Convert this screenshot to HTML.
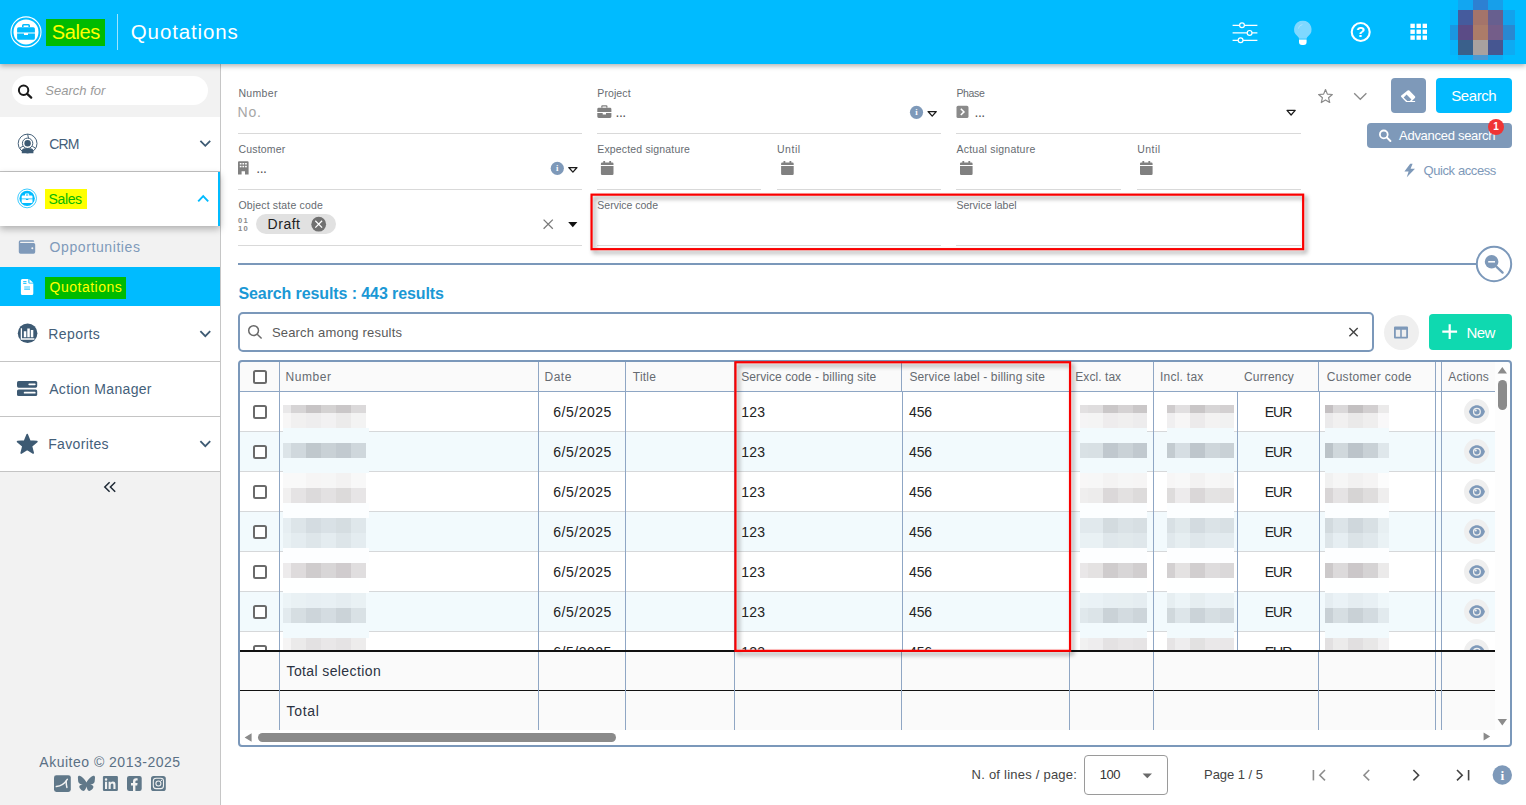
<!DOCTYPE html>
<html lang="en">
<head>
<meta charset="utf-8">
<title>Quotations</title>
<style>
*{box-sizing:border-box;margin:0;padding:0}
html,body{width:1526px;height:805px;overflow:hidden;background:#fff;font-family:"Liberation Sans",sans-serif;color:#333}
body{position:relative}
.a{position:absolute}
.t{position:absolute;white-space:nowrap;line-height:1}
svg.i{position:absolute;left:0;top:0;width:1526px;height:805px;overflow:visible;pointer-events:none}
.cb{position:absolute;left:253px;width:14px;height:14px;border:2px solid #6a6a6a;border-radius:2.5px;background:#fff}
.m{position:absolute}
</style>
</head>
<body>
<!-- ===== SIDEBAR ===== -->
<div class="a" style="left:0;top:64px;width:220px;height:741px;background:#f2f2f2"></div>
<div class="a" style="left:220px;top:64px;width:1px;height:741px;background:#c6c6c6"></div>
<div class="a" style="left:12px;top:76px;width:196px;height:29px;border-radius:15px;background:#fff"></div>
<span class="t" style="left:45.2px;top:83.8px;font-size:13px;color:#9a9a9a;letter-spacing:0.02px;font-style:italic;">Search for</span>
<div class="a" style="left:0;top:117px;width:220px;height:55px;background:#fff;border-bottom:1px solid #c4c4c4"></div>
<span class="t" style="left:49.3px;top:137.1px;font-size:14px;color:#44607a;letter-spacing:-0.9px;">CRM</span>
<div class="a" style="left:0;top:267px;width:220px;height:39px;background:#00bbff"></div>
<div class="a" style="left:45px;top:277px;width:81px;height:22px;background:#00bb00"></div>
<span class="t" style="left:49.6px;top:239.6px;font-size:14px;color:#7f9aba;letter-spacing:0.59px;">Opportunities</span>
<span class="t" style="left:49.6px;top:279.8px;font-size:14px;color:#ffff00;letter-spacing:0.49px;">Quotations</span>
<div class="a" style="left:0;top:172px;width:220px;height:54px;background:#fff;box-shadow:0 3px 7px rgba(0,0,0,.28)"></div>
<div class="a" style="left:218px;top:172px;width:2px;height:54px;background:#00bbff"></div>
<div class="a" style="left:45px;top:189px;width:42px;height:20px;background:#ffff00"></div>
<span class="t" style="left:48.6px;top:191.9px;font-size:14px;color:#08b800;letter-spacing:-0.4px;">Sales</span>
<div class="a" style="left:0;top:306px;width:220px;height:56px;background:#fff;border-bottom:1px solid #c4c4c4"></div>
<div class="a" style="left:0;top:362px;width:220px;height:55px;background:#fff;border-bottom:1px solid #c4c4c4"></div>
<div class="a" style="left:0;top:417px;width:220px;height:55px;background:#fff;border-bottom:1px solid #c4c4c4"></div>
<span class="t" style="left:48.2px;top:327.1px;font-size:14px;color:#44607a;letter-spacing:0.43px;">Reports</span>
<span class="t" style="left:49.2px;top:382.0px;font-size:14px;color:#44607a;letter-spacing:0.33px;">Action Manager</span>
<span class="t" style="left:48.2px;top:437.1px;font-size:14px;color:#44607a;letter-spacing:0.35px;">Favorites</span>
<span class="t" style="left:39.3px;top:754.8px;font-size:14px;color:#5a7085;letter-spacing:0.5px;">Akuiteo © 2013-2025</span>
<svg class="i" viewBox="0 0 1526 805">
<!-- search -->
<circle cx="23.6" cy="90.2" r="4.7" fill="none" stroke="#1a1a1a" stroke-width="2"/><path d="M27.2 93.8 L31.2 97.6" stroke="#1a1a1a" stroke-width="2.3" stroke-linecap="round"/>
<!-- CRM -->
<g transform="translate(0,.7)"><g stroke="#3d5a73" fill="none" stroke-width=".95"><circle cx="27.600" cy="142.800" r="9.400"/><circle cx="27.600" cy="142.600" r="5.200" fill="#fff"/><path d="M27.600 133.400 L28.500 137.500 M19.600 147.600 L23 145.400 M35.600 147.600 L32.200 145.400"/></g>
<circle cx="27.600" cy="142.500" r="3.200" fill="#3d5a73"/><path d="M21.800 152.600 v-1.800 q0 -3.200 3.200 -3.200 h5.200 q3.200 0 3.200 3.200 v1.800 z" fill="#3d5a73"/></g>
<path d="M200.4 140.8 L205.3 145.8 L210.2 140.8" fill="none" stroke="#3d5a73" stroke-width="1.8"/>
<!-- Sales -->
<circle cx="27.100" cy="198.400" r="9.400" fill="none" stroke="#00bbff" stroke-width=".9" opacity=".85"/><circle cx="27.100" cy="198.400" r="7.700" fill="#00bbff"/>
<path d="M21.700 196.600 a1 1 0 0 1 1-1 h8.800 a1 1 0 0 1 1 1 v1.800 h-10.800z M21.700 199.200 h4.200 v.9 h2.400 v-.9 h4.200 v2.800 a1 1 0 0 1-1 1 h-8.800 a1 1 0 0 1-1-1z M25 195.400 v-.9 a.9 .9 0 0 1 .9-.9 h2.400 a.9 .9 0 0 1 .9 .9 v.9 h-1 v-.8 h-2.200 v.8z" fill="#fff"/>
<path d="M198.2 201.4 L203.2 196.2 L208.2 201.4" fill="none" stroke="#00bbff" stroke-width="1.9"/>
<!-- wallet -->
<path d="M20.6 240.2 h12.4 a1.2 1.2 0 0 1 1.2 1.2 v.3 h-13.6 a.6 .6 0 0 0 0 1.2 h13 a1.6 1.6 0 0 1 1.6 1.6 v7.6 a1.6 1.6 0 0 1-1.6 1.6 h-13 a1.8 1.8 0 0 1-1.8-1.8 v-9.9 a1.8 1.8 0 0 1 1.8-1.8z" fill="#7f9aba"/><circle cx="32.3" cy="248.2" r="1" fill="#f2f2f2"/>
<!-- file -->
<path d="M22.4 279 h6 v3.6 a1 1 0 0 0 1 1 h3.9 v9.9 a1.5 1.5 0 0 1-1.5 1.5 h-9.4 a1.5 1.5 0 0 1-1.5-1.5 v-13 a1.5 1.5 0 0 1 1.5-1.5z M29.4 279.2 l3.8 3.6 h-3.4 a.4 .4 0 0 1-.4-.4z" fill="#fff"/>
<path d="M23.200 281.600 h3.300 M23.200 283.500 h3.300 M24.200 287 h5.800 M24.200 289.100 h5.800" stroke="#00bbff" stroke-width="1.100" opacity=".8"/>
<!-- reports -->
<circle cx="27.600" cy="333.300" r="9.800" fill="#3d5a73"/><path d="M21.400 328.200 v10.800 h13" fill="none" stroke="#fff" stroke-width="1.300"/><path d="M23.800 331.200 h2.500 v6.100 h-2.500z M27.300 328.500 h2.500 v8.800 h-2.500z M30.800 330 h2.500 v7.300 h-2.500z" fill="#fff"/>
<path d="M200.4 331.2 L205.3 336.2 L210.2 331.2" fill="none" stroke="#3d5a73" stroke-width="1.8"/>
<!-- action manager -->
<rect x="17" y="381" width="20.2" height="6.7" rx="1.6" fill="#3d5a73"/><rect x="17" y="389.4" width="20.2" height="6.7" rx="1.6" fill="#3d5a73"/><path d="M29.200 384.300 h5.600 M24.600 392.700 h10.200" stroke="#fff" stroke-width="1.700" stroke-linecap="round"/>
<!-- star -->
<path d="M27.20 434.60 L29.85 441.16 L36.90 441.65 L31.48 446.19 L33.20 453.05 L27.20 449.30 L21.20 453.05 L22.92 446.19 L17.50 441.65 L24.55 441.16 Z" fill="#3d5a73" stroke="#3d5a73" stroke-width="1.600" stroke-linejoin="round"/>
<path d="M200.4 441.2 L205.3 446.2 L210.2 441.2" fill="none" stroke="#3d5a73" stroke-width="1.8"/>
<!-- collapse -->
<path d="M109.6 482.2 L104.8 487 L109.6 491.8 M115.2 482.2 L110.4 487 L115.2 491.8" fill="none" stroke="#1f2a36" stroke-width="1.5"/>
<!-- social -->
<g fill="#607889">
<rect x="54" y="775.200" width="16.800" height="16.800" rx="2.400"/>
<path transform="translate(77.900,774.800) scale(.7125)" d="M12 10.8c-1.087-2.114-4.046-6.053-6.798-7.995C2.566.944 1.561 1.266.902 1.565.139 1.908 0 3.080 0 3.768c0 .690.378 5.650.624 6.479.815 2.736 3.713 3.660 6.383 3.364-3.912.580-7.387 2.005-2.830 7.078 5.013 5.190 6.870-1.113 7.823-4.308.953 3.195 2.050 9.271 7.733 4.308 4.267-4.308 1.172-6.498-2.740-7.078 2.670.297 5.568-.628 6.383-3.364.246-.828.624-5.790.624-6.479 0-.690-.139-1.861-.902-2.206-.659-.298-1.664-.620-4.300 1.240C16.046 4.748 13.087 8.687 12 10.800Z"/>
<rect x="102.900" y="775.900" width="15" height="15.100" rx="1.200"/>
<rect x="127" y="775.900" width="14.700" height="15.100" rx="2.200"/>
<rect x="151" y="775.900" width="14.800" height="15.100" rx="2.600"/>
</g>
<path d="M56.300 786.600 Q63.200 786 67.300 779.400" fill="none" stroke="#f2f2f2" stroke-width="1.500" stroke-linecap="round"/><path d="M66.100 781.200 Q66.300 784.800 66.900 787.400" fill="none" stroke="#f2f2f2" stroke-width="1.500" stroke-linecap="round"/>
<path d="M105 781.800 h2.100 v7.200 h-2.100z M106.050 778.200 a1.250 1.250 0 1 1 0 2.500 a1.250 1.250 0 1 1 0-2.500z M108.600 781.800 h2 v1 c.5-.8 1.300-1.200 2.300-1.200 c1.900 0 2.600 1.200 2.600 3.100 v4.300 h-2.100 v-3.800 c0-1-.3-1.700-1.200-1.700 c-1 0-1.500.7-1.500 1.700 v3.800 h-2.100z" fill="#f2f2f2"/>
<path d="M133 791 v-5.600 h-2 v-2.300 h2 v-1.700 c0-2 1.200-3.100 3-3.100 c.8 0 1.600.1 1.600.1 v2 h-1 c-.9 0-1.200.6-1.200 1.200 v1.500 h2.200 l-.4 2.300 h-1.800 v5.600z" fill="#f2f2f2"/>
<rect x="153.300" y="778.300" width="10.200" height="10.300" rx="2.800" fill="none" stroke="#f2f2f2" stroke-width="1.100"/><circle cx="158.400" cy="783.450" r="2.500" fill="none" stroke="#f2f2f2" stroke-width="1.100"/><circle cx="161.400" cy="780.400" r=".65" fill="#f2f2f2"/>
</svg>
<!-- ===== HEADER ===== -->
<div class="a" style="left:0;top:0;width:1526px;height:64px;background:#00bbff;box-shadow:0 2px 5px rgba(0,0,0,.3)"></div>
<div class="a" style="left:46px;top:19px;width:59px;height:27px;background:#00bb00"></div>
<div class="a" style="left:117px;top:14px;width:1px;height:36px;background:rgba(255,255,255,.62)"></div>
<span class="t" style="left:51.7px;top:22.1px;font-size:20px;color:#ffff00;letter-spacing:-0.38px;">Sales</span>
<span class="t" style="left:130.8px;top:21.6px;font-size:20.5px;color:#ffffff;letter-spacing:0.88px;">Quotations</span>
<div class="m" style="left:1458px;top:0px;width:15px;height:10px;background:#12a6f1"></div><div class="m" style="left:1473px;top:0px;width:15px;height:10px;background:#2d80d2"></div><div class="m" style="left:1488px;top:0px;width:15px;height:10px;background:#179fea"></div><div class="m" style="left:1450px;top:10px;width:8px;height:15px;background:#08b1f8"></div><div class="m" style="left:1458px;top:10px;width:15px;height:15px;background:#455b9d"></div><div class="m" style="left:1473px;top:10px;width:15px;height:15px;background:#a4746a"></div><div class="m" style="left:1488px;top:10px;width:15px;height:15px;background:#675f8f"></div><div class="m" style="left:1503px;top:10px;width:12px;height:15px;background:#12a2ec"></div><div class="m" style="left:1450px;top:25px;width:8px;height:15px;background:#1a97e1"></div><div class="m" style="left:1458px;top:25px;width:15px;height:15px;background:#5b4b86"></div><div class="m" style="left:1473px;top:25px;width:15px;height:15px;background:#ac7c69"></div><div class="m" style="left:1488px;top:25px;width:15px;height:15px;background:#745d89"></div><div class="m" style="left:1503px;top:25px;width:12px;height:15px;background:#2988d1"></div><div class="m" style="left:1450px;top:40px;width:8px;height:15px;background:#06b3fa"></div><div class="m" style="left:1458px;top:40px;width:15px;height:15px;background:#3a608b"></div><div class="m" style="left:1473px;top:40px;width:15px;height:15px;background:#a9a19f"></div><div class="m" style="left:1488px;top:40px;width:15px;height:15px;background:#465691"></div><div class="m" style="left:1503px;top:40px;width:12px;height:15px;background:#0eaaf2"></div><div class="m" style="left:1458px;top:55px;width:15px;height:5px;background:#10aaf3"></div><div class="m" style="left:1473px;top:55px;width:15px;height:5px;background:#4a99d2"></div><div class="m" style="left:1488px;top:55px;width:15px;height:5px;background:#0eabf3"></div>
<svg class="i" viewBox="0 0 1526 805">
<!-- logo -->
<circle cx="26" cy="31.900" r="15" fill="none" stroke="#fff" stroke-width="1.100"/><circle cx="26" cy="31.900" r="12.500" fill="#fff"/>
<path d="M17.100 28.800 a1.600 1.600 0 0 1 1.600-1.600 h14.600 a1.600 1.600 0 0 1 1.600 1.600 v3.600 h-17.800z M17.100 33.600 h6.900 v1.500 h4 v-1.500 h6.900 v4.600 a1.600 1.600 0 0 1-1.600 1.600 h-14.600 a1.600 1.600 0 0 1-1.600-1.600z M22 27 v-1.600 a1.500 1.500 0 0 1 1.500-1.500 h5 a1.500 1.500 0 0 1 1.500 1.500 v1.600 h-1.600 v-1.500 h-4.800 v1.500z" fill="#00bbff"/>
<!-- sliders -->
<g stroke="#fff" stroke-width="1.2" fill="#00bbff"><path d="M1232.600 25.300 H1257.400 M1232.600 32.900 H1257.400 M1232.600 40.300 H1257.400"/><circle cx="1242" cy="25.300" r="2.400"/><circle cx="1249.600" cy="32.900" r="2.400"/><circle cx="1240.600" cy="40.300" r="2.400"/></g>
<!-- bulb -->
<path d="M1302.800 20.700 a8.700 8.700 0 0 0-5.300 15.600 c1 .9 1.500 1.700 1.500 2.500 h7.600 c0-.8.5-1.600 1.500-2.500 a8.700 8.700 0 0 0-5.300-15.600z" fill="#7fd8ff"/>
<path d="M1299 39.600 h7.600 v2.400 a3 3 0 0 1-3 3 h-1.600 a3 3 0 0 1-3-3z" fill="#fff"/>
<path d="M1298.400 28.600 a4.600 4.600 0 0 1 4-4" fill="none" stroke="#a8e4ff" stroke-width="1"/>
<!-- help -->
<circle cx="1360.700" cy="32" r="9" fill="none" stroke="#fff" stroke-width="2.100"/>
<text x="1360.700" y="37.400" font-family="Liberation Sans, sans-serif" font-size="15" font-weight="bold" fill="#fff" text-anchor="middle">?</text>
<!-- grid -->
<g fill="#fff"><rect x="1410.4" y="23.7" width="4.4" height="4.3"/><rect x="1416.5" y="23.7" width="4.4" height="4.3"/><rect x="1422.6" y="23.7" width="4.4" height="4.3"/><rect x="1410.4" y="29.6" width="4.4" height="4.3"/><rect x="1416.5" y="29.6" width="4.4" height="4.3"/><rect x="1422.6" y="29.6" width="4.4" height="4.3"/><rect x="1410.4" y="35.5" width="4.4" height="4.3"/><rect x="1416.5" y="35.5" width="4.4" height="4.3"/><rect x="1422.6" y="35.5" width="4.4" height="4.3"/></g>
</svg>
<!-- ===== FILTERS ===== -->
<div class="a" style="left:238px;top:133px;width:344px;height:1px;background:#d9d9d9"></div><div class="a" style="left:238px;top:245px;width:344px;height:1px;background:#d9d9d9"></div><div class="a" style="left:597px;top:133px;width:344px;height:1px;background:#d9d9d9"></div><div class="a" style="left:597px;top:245px;width:344px;height:1px;background:#d9d9d9"></div><div class="a" style="left:956px;top:133px;width:345px;height:1px;background:#d9d9d9"></div><div class="a" style="left:956px;top:245px;width:345px;height:1px;background:#d9d9d9"></div><div class="a" style="left:238px;top:189px;width:344px;height:1px;background:#d9d9d9"></div><div class="a" style="left:597px;top:189px;width:164px;height:1px;background:#d9d9d9"></div><div class="a" style="left:777px;top:189px;width:164px;height:1px;background:#d9d9d9"></div><div class="a" style="left:956px;top:189px;width:165px;height:1px;background:#d9d9d9"></div><div class="a" style="left:1137px;top:189px;width:164px;height:1px;background:#d9d9d9"></div>
<span class="t" style="left:238.4px;top:88.1px;font-size:10.5px;color:#666b71;letter-spacing:0.34px;">Number</span>
<span class="t" style="left:597.3px;top:88.1px;font-size:10.5px;color:#666b71;letter-spacing:0.1px;">Project</span>
<span class="t" style="left:956.5px;top:88.1px;font-size:10.5px;color:#666b71;letter-spacing:-0.38px;">Phase</span>
<span class="t" style="left:238.4px;top:144.0px;font-size:10.5px;color:#666b71;letter-spacing:0.2px;">Customer</span>
<span class="t" style="left:597.3px;top:144.0px;font-size:10.5px;color:#666b71;letter-spacing:0.16px;">Expected signature</span>
<span class="t" style="left:776.9px;top:144.0px;font-size:10.5px;color:#666b71;letter-spacing:0.55px;">Until</span>
<span class="t" style="left:956.5px;top:144.0px;font-size:10.5px;color:#666b71;letter-spacing:0.23px;">Actual signature</span>
<span class="t" style="left:1137.3px;top:144.0px;font-size:10.5px;color:#666b71;letter-spacing:0.43px;">Until</span>
<span class="t" style="left:238.4px;top:200.0px;font-size:10.5px;color:#666b71;letter-spacing:0.17px;">Object state code</span>
<span class="t" style="left:597.3px;top:200.0px;font-size:10.5px;color:#666b71;">Service code</span>
<span class="t" style="left:956.5px;top:200.0px;font-size:10.5px;color:#666b71;">Service label</span>
<span class="t" style="left:237.4px;top:105.1px;font-size:14px;color:#a6a6a6;letter-spacing:0.9px;">No.</span>
<span class="t" style="left:256.3px;top:160.6px;font-size:14px;color:#555;letter-spacing:-0.5px;">...</span>
<span class="t" style="left:615.6px;top:104.6px;font-size:14px;color:#555;letter-spacing:-0.6px;">...</span>
<span class="t" style="left:974.6px;top:104.6px;font-size:14px;color:#555;letter-spacing:-0.5px;">...</span>
<div class="a" style="left:256px;top:214px;width:80px;height:20px;border-radius:10px;background:#e1e1e1"></div>
<span class="t" style="left:267.6px;top:217.0px;font-size:14px;color:#222;letter-spacing:0.52px;">Draft</span>
<div class="a" style="left:1391px;top:78px;width:35px;height:35px;border-radius:4px;background:#7e99b9"></div>
<div class="a" style="left:1436px;top:78px;width:76px;height:35px;border-radius:4px;background:#00bbff"></div>
<div class="a" style="left:1367px;top:123px;width:145px;height:25px;border-radius:4px;background:#7e99b9"></div>
<span class="t" style="left:1451.3px;top:88.2px;font-size:15px;color:#fff;letter-spacing:-0.44px;">Search</span>
<span class="t" style="left:1399.1px;top:128.7px;font-size:13px;color:#fff;letter-spacing:-0.29px;">Advanced search</span>
<span class="t" style="left:1423.5px;top:164.2px;font-size:13px;color:#7e99b9;letter-spacing:-0.41px;">Quick access</span>
<div class="a" style="left:1488px;top:119px;width:16px;height:16px;border-radius:8px;background:#f03434"></div>
<span class="t" style="left:1493.2px;top:122.2px;font-size:10px;font-weight:bold;color:#fff">1</span>
<div class="a" style="left:238px;top:263px;width:1240px;height:2px;background:#7b98ba"></div>
<span class="t" style="left:238.5px;top:286.0px;font-size:16px;color:#1b98d5;letter-spacing:-0.1px;font-weight:bold;">Search results : 443 results</span>
<div class="a" style="left:238px;top:312px;width:1136px;height:40px;border:2px solid #7b98ba;border-radius:5px;background:#fff"></div>
<span class="t" style="left:271.9px;top:325.9px;font-size:13px;color:#5a5a5a;letter-spacing:0.19px;">Search among results</span>
<div class="a" style="left:1384px;top:315px;width:35px;height:35px;border-radius:50%;background:#efefef"></div>
<div class="a" style="left:1429px;top:314px;width:83px;height:36px;border-radius:4px;background:#0fd9b0"></div>
<span class="t" style="left:1466.5px;top:325.3px;font-size:15px;color:#fff;letter-spacing:-0.55px;">New</span>
<svg class="i" viewBox="0 0 1526 805">
<!-- building -->
<path d="M239 161.300 h8.600 a1 1 0 0 1 1 1 v12.300 h-3.600 v-3.400 h-3.400 v3.400 h-3.600 v-12.300 a1 1 0 0 1 1-1z" fill="#808080"/>
<g fill="#fff"><rect x="239.800" y="163" width="1.700" height="1.500"/><rect x="242.450" y="163" width="1.700" height="1.500"/><rect x="245.100" y="163" width="1.700" height="1.500"/><rect x="239.800" y="165.800" width="1.700" height="1.500"/><rect x="242.450" y="165.800" width="1.700" height="1.500"/><rect x="245.100" y="165.800" width="1.700" height="1.500"/></g>
<!-- briefcase -->
<path d="M597.300 109.200 a1.400 1.400 0 0 1 1.400-1.400 h11.300 a1.400 1.400 0 0 1 1.400 1.400 v2.900 h-14.100z M597.300 113.100 h5.400 v1.300 h3.300 v-1.300 h5.400 v3.500 a1.400 1.400 0 0 1-1.400 1.400 h-11.300 a1.400 1.400 0 0 1-1.400-1.400z M601.200 107.600 v-1.100 a1.200 1.200 0 0 1 1.200-1.200 h3.900 a1.200 1.200 0 0 1 1.200 1.200 v1.100 h-1.300 v-1 h-3.700 v1z" fill="#808080"/>
<!-- phase -->
<rect x="956.500" y="105.800" width="12" height="12.200" rx="1.600" fill="#8a8a8a"/><path d="M960.800 108.800 L964 111.900 L960.800 115" fill="none" stroke="#fff" stroke-width="1.500"/>
<path d="M603.3 160.9 h1.800 v1.600 h4.200 v-1.600 h1.800 v1.600 h1.200 a1.200 1.200 0 0 1 1.200 1.200 v1.400 h-12.600 v-1.400 a1.200 1.200 0 0 1 1.200-1.200 h1.200z M600.9 166.0 h12.600 v7.700 a1.200 1.200 0 0 1-1.200 1.200 h-10.200 a1.200 1.200 0 0 1-1.200-1.200z" fill="#808080"/><path d="M783.5 160.9 h1.800 v1.600 h4.200 v-1.600 h1.800 v1.600 h1.200 a1.200 1.200 0 0 1 1.200 1.200 v1.400 h-12.600 v-1.400 a1.200 1.200 0 0 1 1.200-1.200 h1.200z M781.1 166.0 h12.600 v7.700 a1.200 1.200 0 0 1-1.200 1.200 h-10.200 a1.200 1.200 0 0 1-1.200-1.200z" fill="#808080"/><path d="M962.4 160.9 h1.800 v1.600 h4.200 v-1.600 h1.800 v1.600 h1.200 a1.200 1.200 0 0 1 1.200 1.200 v1.400 h-12.600 v-1.400 a1.200 1.200 0 0 1 1.200-1.200 h1.200z M960.0 166.0 h12.600 v7.700 a1.200 1.200 0 0 1-1.200 1.200 h-10.200 a1.200 1.200 0 0 1-1.200-1.200z" fill="#808080"/><path d="M1142.4 160.9 h1.800 v1.600 h4.200 v-1.600 h1.800 v1.600 h1.200 a1.200 1.200 0 0 1 1.200 1.200 v1.400 h-12.600 v-1.400 a1.200 1.200 0 0 1 1.200-1.200 h1.200z M1140.0 166.0 h12.600 v7.700 a1.200 1.200 0 0 1-1.200 1.200 h-10.200 a1.200 1.200 0 0 1-1.200-1.200z" fill="#808080"/>
<!-- 01 10 -->
<text x="238" y="222.700" style="font-family:'Liberation Sans',sans-serif;font-size:7.600px;font-weight:bold;letter-spacing:1.300px" fill="#8a8a8a">01</text>
<text x="238" y="230.500" style="font-family:'Liberation Sans',sans-serif;font-size:7.600px;font-weight:bold;letter-spacing:1.300px" fill="#8a8a8a">10</text>
<circle cx="557.3" cy="168.3" r="6.6" fill="#7e99b9"/><text x="557.3" y="171.3" font-family="Liberation Serif, serif" font-size="8.600" font-weight="bold" fill="#fff" text-anchor="middle">i</text><circle cx="916.5" cy="112.3" r="6.6" fill="#7e99b9"/><text x="916.5" y="115.3" font-family="Liberation Serif, serif" font-size="8.600" font-weight="bold" fill="#fff" text-anchor="middle">i</text>
<path d="M568.8 167.5 L577 167.5 L572.9 172.1 Z" fill="#fff" stroke="#1a1a1a" stroke-width="1.250" stroke-linejoin="round"/><path d="M928.1 111.5 L936.3 111.5 L932.2 116.1 Z" fill="#fff" stroke="#1a1a1a" stroke-width="1.250" stroke-linejoin="round"/><path d="M1287 110.4 L1295.2 110.4 L1291.1 115 Z" fill="#fff" stroke="#1a1a1a" stroke-width="1.250" stroke-linejoin="round"/>
<!-- clear + dropdown -->
<path d="M543.600 219.600 L552.800 228.800 M552.800 219.600 L543.600 228.800" stroke="#7a7a7a" stroke-width="1.300"/>
<path d="M568.200 221.900 H577.400 L572.800 227.200 Z" fill="#111"/>
<!-- chip close -->
<circle cx="318.700" cy="224.200" r="7.400" fill="#707070"/><path d="M315.300 220.800 L322.100 227.600 M322.100 220.800 L315.300 227.600" stroke="#fff" stroke-width="1.250"/>
<!-- star + chevron -->
<path d="M1325.50 89.50 L1327.38 94.11 L1332.35 94.48 L1328.54 97.69 L1329.73 102.52 L1325.50 99.90 L1321.27 102.52 L1322.46 97.69 L1318.65 94.48 L1323.62 94.11 Z" fill="none" stroke="#8a8a8a" stroke-width="1.200" stroke-linejoin="round"/>
<path d="M1354.200 93.200 L1360.300 99.300 L1366.400 93.200" fill="none" stroke="#8a8a8a" stroke-width="1.300"/>
<!-- eraser -->
<path d="M1407.600 90.600 a1.200 1.200 0 0 1 1.700 0 l5.600 5.600 a1.200 1.200 0 0 1 0 1.700 l-3 3 h3.200 v1 h-9 l-4.800-4.800 a1.200 1.200 0 0 1 0-1.700z" fill="#fff"/><path d="M1403.600 97.600 l3.600 3.400 h2.600 l1.600-1.600 l-4.800-4.800z" fill="#7e99b9"/>
<!-- adv search icon -->
<circle cx="1383.800" cy="134.400" r="3.900" fill="none" stroke="#fff" stroke-width="1.800"/><path d="M1386.800 137.400 L1390.400 141" stroke="#fff" stroke-width="2" stroke-linecap="round"/>
<!-- bolt -->
<path d="M1410.200 163.800 L1404.400 171.600 H1408.600 L1406.800 177.200 L1415 168.800 H1410.600 L1412.600 163.800 Z" fill="#7e99b9"/>
<!-- zoom-out circle -->
<circle cx="1494" cy="264" r="17.200" fill="#fff" stroke="#7b98ba" stroke-width="2"/>
<circle cx="1491.600" cy="261.800" r="6.800" fill="#7e99b9"/><path d="M1488.200 261.800 H1495" stroke="#fff" stroke-width="1.500"/><path d="M1496.600 266.800 L1502.600 272.600" stroke="#7e99b9" stroke-width="2.300" stroke-linecap="round"/>
<!-- search among results icons -->
<circle cx="253.600" cy="330.600" r="4.900" fill="none" stroke="#6a6a6a" stroke-width="1.500"/><path d="M257.200 334.300 L261.600 338.500" stroke="#6a6a6a" stroke-width="1.500"/>
<path d="M1349.400 327.900 L1357.700 336.300 M1357.700 327.900 L1349.400 336.300" stroke="#444" stroke-width="1.400"/>
<!-- columns btn -->
<path d="M1395 326.600 h12 a1 1 0 0 1 1 1 v10 a1 1 0 0 1-1 1 h-12 a1 1 0 0 1-1-1 v-10 a1 1 0 0 1 1-1z M1395.800 329.800 v7 h4.400 v-7z M1401.800 329.800 v7 h4.400 v-7z" fill="#7e99b9" fill-rule="evenodd"/>
<!-- plus -->
<path d="M1442.300 331.700 H1457.100 M1449.700 324.300 V339.100" stroke="#fff" stroke-width="2.200"/>
</svg>
<!-- ===== TABLE ===== -->
<div class="a" style="left:240px;top:392px;width:1255px;height:40px;background:#fff;border-bottom:1px solid #d6d8da"></div><div class="a" style="left:240px;top:432px;width:1255px;height:40px;background:#f2fafd;border-bottom:1px solid #d6d8da"></div><div class="a" style="left:240px;top:472px;width:1255px;height:40px;background:#fff;border-bottom:1px solid #d6d8da"></div><div class="a" style="left:240px;top:512px;width:1255px;height:40px;background:#f2fafd;border-bottom:1px solid #d6d8da"></div><div class="a" style="left:240px;top:552px;width:1255px;height:40px;background:#fff;border-bottom:1px solid #d6d8da"></div><div class="a" style="left:240px;top:592px;width:1255px;height:40px;background:#f2fafd;border-bottom:1px solid #d6d8da"></div><div class="a" style="left:240px;top:632px;width:1255px;height:40px;background:#fff;border-bottom:1px solid #d6d8da"></div>
<div class="a" style="left:240px;top:362px;width:1255px;height:30px;background:#fafafa;border-bottom:1px solid #8ea6c4"></div>
<div class="a" style="left:279px;top:392px;width:1px;height:258px;background:#8fa6c4"></div><div class="a" style="left:538px;top:392px;width:1px;height:258px;background:#8fa6c4"></div><div class="a" style="left:625px;top:392px;width:1px;height:258px;background:#8fa6c4"></div><div class="a" style="left:734px;top:392px;width:1px;height:258px;background:#8fa6c4"></div><div class="a" style="left:902px;top:392px;width:1px;height:258px;background:#8fa6c4"></div><div class="a" style="left:1069px;top:392px;width:1px;height:258px;background:#8fa6c4"></div><div class="a" style="left:1153px;top:392px;width:1px;height:258px;background:#8fa6c4"></div><div class="a" style="left:1237px;top:392px;width:1px;height:258px;background:#8fa6c4"></div><div class="a" style="left:1319px;top:392px;width:1px;height:258px;background:#8fa6c4"></div><div class="a" style="left:1435px;top:392px;width:1px;height:258px;background:#8fa6c4"></div><div class="a" style="left:1441px;top:392px;width:1px;height:258px;background:#8fa6c4"></div><div class="a" style="left:279px;top:362px;width:1px;height:29px;background:#8fa6c4"></div><div class="a" style="left:538px;top:362px;width:1px;height:29px;background:#8fa6c4"></div><div class="a" style="left:625px;top:362px;width:1px;height:29px;background:#8fa6c4"></div><div class="a" style="left:734px;top:362px;width:1px;height:29px;background:#8fa6c4"></div><div class="a" style="left:901px;top:362px;width:1px;height:29px;background:#8fa6c4"></div><div class="a" style="left:1069px;top:362px;width:1px;height:29px;background:#8fa6c4"></div><div class="a" style="left:1153px;top:362px;width:1px;height:29px;background:#8fa6c4"></div><div class="a" style="left:1318px;top:362px;width:1px;height:29px;background:#8fa6c4"></div><div class="a" style="left:1435px;top:362px;width:1px;height:29px;background:#8fa6c4"></div><div class="a" style="left:1441px;top:362px;width:1px;height:29px;background:#8fa6c4"></div>
<div class="m" style="left:283px;top:405px;width:86px;height:8px;background:#ffffff"></div><div class="m" style="left:283px;top:405px;width:8px;height:8px;background:#e9e8e9"></div><div class="m" style="left:291px;top:405px;width:15px;height:8px;background:#d6d4d5"></div><div class="m" style="left:306px;top:405px;width:15px;height:8px;background:#c7c4c5"></div><div class="m" style="left:321px;top:405px;width:15px;height:8px;background:#d4d2d2"></div><div class="m" style="left:336px;top:405px;width:15px;height:8px;background:#cac7c8"></div><div class="m" style="left:351px;top:405px;width:15px;height:8px;background:#dbd9da"></div><div class="m" style="left:283px;top:413px;width:86px;height:15px;background:#ffffff"></div><div class="m" style="left:283px;top:413px;width:8px;height:15px;background:#f7f6f6"></div><div class="m" style="left:291px;top:413px;width:15px;height:15px;background:#f1f0f0"></div><div class="m" style="left:306px;top:413px;width:15px;height:15px;background:#eeedee"></div><div class="m" style="left:321px;top:413px;width:15px;height:15px;background:#f2f1f2"></div><div class="m" style="left:336px;top:413px;width:15px;height:15px;background:#ecebeb"></div><div class="m" style="left:351px;top:413px;width:15px;height:15px;background:#f3f3f3"></div><div class="m" style="left:283px;top:428px;width:86px;height:15px;background:#f2fafd"></div><div class="m" style="left:283px;top:443px;width:86px;height:15px;background:#f2fafd"></div><div class="m" style="left:283px;top:443px;width:8px;height:15px;background:#dce4e8"></div><div class="m" style="left:291px;top:443px;width:15px;height:15px;background:#d0d8dd"></div><div class="m" style="left:306px;top:443px;width:15px;height:15px;background:#c0c8cd"></div><div class="m" style="left:321px;top:443px;width:15px;height:15px;background:#c9d1d6"></div><div class="m" style="left:336px;top:443px;width:15px;height:15px;background:#c2cad0"></div><div class="m" style="left:351px;top:443px;width:15px;height:15px;background:#cfd7dc"></div><div class="m" style="left:283px;top:458px;width:86px;height:15px;background:#f2fafd"></div><div class="m" style="left:283px;top:473px;width:86px;height:15px;background:#ffffff"></div><div class="m" style="left:283px;top:473px;width:8px;height:15px;background:#f9f9f9"></div><div class="m" style="left:291px;top:473px;width:15px;height:15px;background:#f9f9f9"></div><div class="m" style="left:306px;top:473px;width:15px;height:15px;background:#f6f5f5"></div><div class="m" style="left:321px;top:473px;width:15px;height:15px;background:#f6f6f6"></div><div class="m" style="left:336px;top:473px;width:15px;height:15px;background:#f3f2f2"></div><div class="m" style="left:351px;top:473px;width:15px;height:15px;background:#f8f8f8"></div><div class="m" style="left:283px;top:488px;width:86px;height:15px;background:#ffffff"></div><div class="m" style="left:283px;top:488px;width:8px;height:15px;background:#f1f0f0"></div><div class="m" style="left:291px;top:488px;width:15px;height:15px;background:#e5e3e4"></div><div class="m" style="left:306px;top:488px;width:15px;height:15px;background:#dcdadb"></div><div class="m" style="left:321px;top:488px;width:15px;height:15px;background:#e3e1e2"></div><div class="m" style="left:336px;top:488px;width:15px;height:15px;background:#dcdada"></div><div class="m" style="left:351px;top:488px;width:15px;height:15px;background:#e7e5e6"></div><div class="m" style="left:283px;top:503px;width:86px;height:15px;background:#fcfeff"></div><div class="m" style="left:283px;top:518px;width:86px;height:15px;background:#f2fafd"></div><div class="m" style="left:283px;top:518px;width:8px;height:15px;background:#e6eef2"></div><div class="m" style="left:291px;top:518px;width:15px;height:15px;background:#dde5e9"></div><div class="m" style="left:306px;top:518px;width:15px;height:15px;background:#d4dce1"></div><div class="m" style="left:321px;top:518px;width:15px;height:15px;background:#d9e1e6"></div><div class="m" style="left:336px;top:518px;width:15px;height:15px;background:#d5dde1"></div><div class="m" style="left:351px;top:518px;width:15px;height:15px;background:#dfe7eb"></div><div class="m" style="left:283px;top:533px;width:86px;height:15px;background:#f2fafd"></div><div class="m" style="left:283px;top:533px;width:8px;height:15px;background:#e9f1f4"></div><div class="m" style="left:291px;top:533px;width:15px;height:15px;background:#e4ecf0"></div><div class="m" style="left:306px;top:533px;width:15px;height:15px;background:#dee6ea"></div><div class="m" style="left:321px;top:533px;width:15px;height:15px;background:#e4ecf0"></div><div class="m" style="left:336px;top:533px;width:15px;height:15px;background:#dde5e9"></div><div class="m" style="left:351px;top:533px;width:15px;height:15px;background:#e4ecf0"></div><div class="m" style="left:283px;top:548px;width:86px;height:15px;background:#fdfeff"></div><div class="m" style="left:283px;top:563px;width:86px;height:15px;background:#ffffff"></div><div class="m" style="left:283px;top:563px;width:8px;height:15px;background:#edebec"></div><div class="m" style="left:291px;top:563px;width:15px;height:15px;background:#dedbdc"></div><div class="m" style="left:306px;top:563px;width:15px;height:15px;background:#cfcccd"></div><div class="m" style="left:321px;top:563px;width:15px;height:15px;background:#d8d6d7"></div><div class="m" style="left:336px;top:563px;width:15px;height:15px;background:#d0ccce"></div><div class="m" style="left:351px;top:563px;width:15px;height:15px;background:#e0dedf"></div><div class="m" style="left:283px;top:578px;width:86px;height:15px;background:#feffff"></div><div class="m" style="left:283px;top:593px;width:86px;height:15px;background:#f2fafd"></div><div class="m" style="left:283px;top:593px;width:8px;height:15px;background:#ecf4f7"></div><div class="m" style="left:291px;top:593px;width:15px;height:15px;background:#e9f1f4"></div><div class="m" style="left:306px;top:593px;width:15px;height:15px;background:#e7eff3"></div><div class="m" style="left:321px;top:593px;width:15px;height:15px;background:#e8f0f4"></div><div class="m" style="left:336px;top:593px;width:15px;height:15px;background:#e5edf1"></div><div class="m" style="left:351px;top:593px;width:15px;height:15px;background:#e9f1f4"></div><div class="m" style="left:283px;top:608px;width:86px;height:15px;background:#f2fafd"></div><div class="m" style="left:283px;top:608px;width:8px;height:15px;background:#e2eaee"></div><div class="m" style="left:291px;top:608px;width:15px;height:15px;background:#d6dee2"></div><div class="m" style="left:306px;top:608px;width:15px;height:15px;background:#cdd5da"></div><div class="m" style="left:321px;top:608px;width:15px;height:15px;background:#d4dce1"></div><div class="m" style="left:336px;top:608px;width:15px;height:15px;background:#cbd3d8"></div><div class="m" style="left:351px;top:608px;width:15px;height:15px;background:#d9e1e5"></div><div class="m" style="left:283px;top:623px;width:86px;height:15px;background:#f2fafd"></div><div class="m" style="left:283px;top:638px;width:86px;height:14px;background:#ffffff"></div><div class="m" style="left:283px;top:638px;width:8px;height:14px;background:#f5f4f4"></div><div class="m" style="left:291px;top:638px;width:15px;height:14px;background:#ebeaea"></div><div class="m" style="left:306px;top:638px;width:15px;height:14px;background:#e3e1e2"></div><div class="m" style="left:321px;top:638px;width:15px;height:14px;background:#e9e7e8"></div><div class="m" style="left:336px;top:638px;width:15px;height:14px;background:#e5e3e4"></div><div class="m" style="left:351px;top:638px;width:15px;height:14px;background:#edecec"></div>
<div class="m" style="left:1080px;top:405px;width:67px;height:8px;background:#ffffff"></div><div class="m" style="left:1080px;top:405px;width:8px;height:8px;background:#e2e0e1"></div><div class="m" style="left:1088px;top:405px;width:15px;height:8px;background:#dfddde"></div><div class="m" style="left:1103px;top:405px;width:15px;height:8px;background:#cac7c8"></div><div class="m" style="left:1118px;top:405px;width:15px;height:8px;background:#d5d2d3"></div><div class="m" style="left:1133px;top:405px;width:14px;height:8px;background:#cac7c8"></div><div class="m" style="left:1080px;top:413px;width:67px;height:15px;background:#ffffff"></div><div class="m" style="left:1080px;top:413px;width:8px;height:15px;background:#f5f4f5"></div><div class="m" style="left:1088px;top:413px;width:15px;height:15px;background:#f4f4f4"></div><div class="m" style="left:1103px;top:413px;width:15px;height:15px;background:#eeeced"></div><div class="m" style="left:1118px;top:413px;width:15px;height:15px;background:#f0efef"></div><div class="m" style="left:1133px;top:413px;width:14px;height:15px;background:#edeced"></div><div class="m" style="left:1080px;top:428px;width:67px;height:15px;background:#f2fafd"></div><div class="m" style="left:1080px;top:443px;width:67px;height:15px;background:#f2fafd"></div><div class="m" style="left:1080px;top:443px;width:8px;height:15px;background:#d9e1e5"></div><div class="m" style="left:1088px;top:443px;width:15px;height:15px;background:#d8e0e4"></div><div class="m" style="left:1103px;top:443px;width:15px;height:15px;background:#c0c8ce"></div><div class="m" style="left:1118px;top:443px;width:15px;height:15px;background:#cad2d7"></div><div class="m" style="left:1133px;top:443px;width:14px;height:15px;background:#c1c9cf"></div><div class="m" style="left:1080px;top:458px;width:67px;height:15px;background:#f2fafd"></div><div class="m" style="left:1080px;top:473px;width:67px;height:15px;background:#ffffff"></div><div class="m" style="left:1080px;top:473px;width:8px;height:15px;background:#f8f7f7"></div><div class="m" style="left:1088px;top:473px;width:15px;height:15px;background:#f7f7f7"></div><div class="m" style="left:1103px;top:473px;width:15px;height:15px;background:#f4f3f3"></div><div class="m" style="left:1118px;top:473px;width:15px;height:15px;background:#f6f6f6"></div><div class="m" style="left:1133px;top:473px;width:14px;height:15px;background:#f6f5f5"></div><div class="m" style="left:1080px;top:488px;width:67px;height:15px;background:#ffffff"></div><div class="m" style="left:1080px;top:488px;width:8px;height:15px;background:#efeeee"></div><div class="m" style="left:1088px;top:488px;width:15px;height:15px;background:#edecec"></div><div class="m" style="left:1103px;top:488px;width:15px;height:15px;background:#dbd8d9"></div><div class="m" style="left:1118px;top:488px;width:15px;height:15px;background:#e3e1e1"></div><div class="m" style="left:1133px;top:488px;width:14px;height:15px;background:#dddbdb"></div><div class="m" style="left:1080px;top:503px;width:67px;height:15px;background:#fcfeff"></div><div class="m" style="left:1080px;top:518px;width:67px;height:15px;background:#f2fafd"></div><div class="m" style="left:1080px;top:518px;width:8px;height:15px;background:#e1e9ed"></div><div class="m" style="left:1088px;top:518px;width:15px;height:15px;background:#e1e9ed"></div><div class="m" style="left:1103px;top:518px;width:15px;height:15px;background:#d3dbdf"></div><div class="m" style="left:1118px;top:518px;width:15px;height:15px;background:#dae2e6"></div><div class="m" style="left:1133px;top:518px;width:14px;height:15px;background:#d7dfe3"></div><div class="m" style="left:1080px;top:533px;width:67px;height:15px;background:#f2fafd"></div><div class="m" style="left:1080px;top:533px;width:8px;height:15px;background:#e9f1f4"></div><div class="m" style="left:1088px;top:533px;width:15px;height:15px;background:#e9f1f4"></div><div class="m" style="left:1103px;top:533px;width:15px;height:15px;background:#dfe7eb"></div><div class="m" style="left:1118px;top:533px;width:15px;height:15px;background:#e1e9ec"></div><div class="m" style="left:1133px;top:533px;width:14px;height:15px;background:#dfe7eb"></div><div class="m" style="left:1080px;top:548px;width:67px;height:15px;background:#fdfeff"></div><div class="m" style="left:1080px;top:563px;width:67px;height:15px;background:#ffffff"></div><div class="m" style="left:1080px;top:563px;width:8px;height:15px;background:#e9e7e8"></div><div class="m" style="left:1088px;top:563px;width:15px;height:15px;background:#e4e2e2"></div><div class="m" style="left:1103px;top:563px;width:15px;height:15px;background:#cfcccd"></div><div class="m" style="left:1118px;top:563px;width:15px;height:15px;background:#d8d6d7"></div><div class="m" style="left:1133px;top:563px;width:14px;height:15px;background:#d1cecf"></div><div class="m" style="left:1080px;top:578px;width:67px;height:15px;background:#feffff"></div><div class="m" style="left:1080px;top:593px;width:67px;height:15px;background:#f2fafd"></div><div class="m" style="left:1080px;top:593px;width:8px;height:15px;background:#ebf3f6"></div><div class="m" style="left:1088px;top:593px;width:15px;height:15px;background:#eaf2f6"></div><div class="m" style="left:1103px;top:593px;width:15px;height:15px;background:#e7eff3"></div><div class="m" style="left:1118px;top:593px;width:15px;height:15px;background:#e7eff2"></div><div class="m" style="left:1133px;top:593px;width:14px;height:15px;background:#e5edf1"></div><div class="m" style="left:1080px;top:608px;width:67px;height:15px;background:#f2fafd"></div><div class="m" style="left:1080px;top:608px;width:8px;height:15px;background:#e0e8ec"></div><div class="m" style="left:1088px;top:608px;width:15px;height:15px;background:#dce4e8"></div><div class="m" style="left:1103px;top:608px;width:15px;height:15px;background:#cad2d7"></div><div class="m" style="left:1118px;top:608px;width:15px;height:15px;background:#d3dbe0"></div><div class="m" style="left:1133px;top:608px;width:14px;height:15px;background:#cdd5da"></div><div class="m" style="left:1080px;top:623px;width:67px;height:15px;background:#f2fafd"></div><div class="m" style="left:1080px;top:638px;width:67px;height:14px;background:#ffffff"></div><div class="m" style="left:1080px;top:638px;width:8px;height:14px;background:#f1f1f1"></div><div class="m" style="left:1088px;top:638px;width:15px;height:14px;background:#eeedee"></div><div class="m" style="left:1103px;top:638px;width:15px;height:14px;background:#e4e2e3"></div><div class="m" style="left:1118px;top:638px;width:15px;height:14px;background:#e8e6e7"></div><div class="m" style="left:1133px;top:638px;width:14px;height:14px;background:#e6e4e5"></div>
<div class="m" style="left:1167px;top:405px;width:67px;height:8px;background:#ffffff"></div><div class="m" style="left:1167px;top:405px;width:8px;height:8px;background:#cfcccd"></div><div class="m" style="left:1175px;top:405px;width:15px;height:8px;background:#e1dfe0"></div><div class="m" style="left:1190px;top:405px;width:15px;height:8px;background:#c9c6c7"></div><div class="m" style="left:1205px;top:405px;width:15px;height:8px;background:#d7d5d6"></div><div class="m" style="left:1220px;top:405px;width:14px;height:8px;background:#d3d0d1"></div><div class="m" style="left:1167px;top:413px;width:67px;height:15px;background:#ffffff"></div><div class="m" style="left:1167px;top:413px;width:8px;height:15px;background:#f0eff0"></div><div class="m" style="left:1175px;top:413px;width:15px;height:15px;background:#f7f6f6"></div><div class="m" style="left:1190px;top:413px;width:15px;height:15px;background:#eceaeb"></div><div class="m" style="left:1205px;top:413px;width:15px;height:15px;background:#f3f2f2"></div><div class="m" style="left:1220px;top:413px;width:14px;height:15px;background:#f1f1f1"></div><div class="m" style="left:1167px;top:428px;width:67px;height:15px;background:#f2fafd"></div><div class="m" style="left:1167px;top:443px;width:67px;height:15px;background:#f2fafd"></div><div class="m" style="left:1167px;top:443px;width:8px;height:15px;background:#c3cbd0"></div><div class="m" style="left:1175px;top:443px;width:15px;height:15px;background:#d6dee3"></div><div class="m" style="left:1190px;top:443px;width:15px;height:15px;background:#bec6cc"></div><div class="m" style="left:1205px;top:443px;width:15px;height:15px;background:#ced6db"></div><div class="m" style="left:1220px;top:443px;width:14px;height:15px;background:#c9d1d6"></div><div class="m" style="left:1167px;top:458px;width:67px;height:15px;background:#f2fafd"></div><div class="m" style="left:1167px;top:473px;width:67px;height:15px;background:#ffffff"></div><div class="m" style="left:1167px;top:473px;width:8px;height:15px;background:#f7f6f6"></div><div class="m" style="left:1175px;top:473px;width:15px;height:15px;background:#f8f8f8"></div><div class="m" style="left:1190px;top:473px;width:15px;height:15px;background:#f3f2f2"></div><div class="m" style="left:1205px;top:473px;width:15px;height:15px;background:#f7f7f7"></div><div class="m" style="left:1220px;top:473px;width:14px;height:15px;background:#f5f5f5"></div><div class="m" style="left:1167px;top:488px;width:67px;height:15px;background:#ffffff"></div><div class="m" style="left:1167px;top:488px;width:8px;height:15px;background:#dedcdc"></div><div class="m" style="left:1175px;top:488px;width:15px;height:15px;background:#edebec"></div><div class="m" style="left:1190px;top:488px;width:15px;height:15px;background:#dad7d8"></div><div class="m" style="left:1205px;top:488px;width:15px;height:15px;background:#e4e3e3"></div><div class="m" style="left:1220px;top:488px;width:14px;height:15px;background:#e3e1e1"></div><div class="m" style="left:1167px;top:503px;width:67px;height:15px;background:#fcfeff"></div><div class="m" style="left:1167px;top:518px;width:67px;height:15px;background:#f2fafd"></div><div class="m" style="left:1167px;top:518px;width:8px;height:15px;background:#d8e0e4"></div><div class="m" style="left:1175px;top:518px;width:15px;height:15px;background:#e0e8eb"></div><div class="m" style="left:1190px;top:518px;width:15px;height:15px;background:#d3dbe0"></div><div class="m" style="left:1205px;top:518px;width:15px;height:15px;background:#dbe3e7"></div><div class="m" style="left:1220px;top:518px;width:14px;height:15px;background:#d8e0e4"></div><div class="m" style="left:1167px;top:533px;width:67px;height:15px;background:#f2fafd"></div><div class="m" style="left:1167px;top:533px;width:8px;height:15px;background:#e0e8ec"></div><div class="m" style="left:1175px;top:533px;width:15px;height:15px;background:#e6eef1"></div><div class="m" style="left:1190px;top:533px;width:15px;height:15px;background:#dfe7eb"></div><div class="m" style="left:1205px;top:533px;width:15px;height:15px;background:#e3ebef"></div><div class="m" style="left:1220px;top:533px;width:14px;height:15px;background:#e3ebef"></div><div class="m" style="left:1167px;top:548px;width:67px;height:15px;background:#fdfeff"></div><div class="m" style="left:1167px;top:563px;width:67px;height:15px;background:#ffffff"></div><div class="m" style="left:1167px;top:563px;width:8px;height:15px;background:#d3d0d1"></div><div class="m" style="left:1175px;top:563px;width:15px;height:15px;background:#e4e2e2"></div><div class="m" style="left:1190px;top:563px;width:15px;height:15px;background:#d1cecf"></div><div class="m" style="left:1205px;top:563px;width:15px;height:15px;background:#dedcdd"></div><div class="m" style="left:1220px;top:563px;width:14px;height:15px;background:#dad8d9"></div><div class="m" style="left:1167px;top:578px;width:67px;height:15px;background:#feffff"></div><div class="m" style="left:1167px;top:593px;width:67px;height:15px;background:#f2fafd"></div><div class="m" style="left:1167px;top:593px;width:8px;height:15px;background:#e6eef1"></div><div class="m" style="left:1175px;top:593px;width:15px;height:15px;background:#ecf4f7"></div><div class="m" style="left:1190px;top:593px;width:15px;height:15px;background:#e6eef1"></div><div class="m" style="left:1205px;top:593px;width:15px;height:15px;background:#eaf2f6"></div><div class="m" style="left:1220px;top:593px;width:14px;height:15px;background:#e9f1f4"></div><div class="m" style="left:1167px;top:608px;width:67px;height:15px;background:#f2fafd"></div><div class="m" style="left:1167px;top:608px;width:8px;height:15px;background:#d0d8dc"></div><div class="m" style="left:1175px;top:608px;width:15px;height:15px;background:#dde5e9"></div><div class="m" style="left:1190px;top:608px;width:15px;height:15px;background:#cbd3d8"></div><div class="m" style="left:1205px;top:608px;width:15px;height:15px;background:#d6dee2"></div><div class="m" style="left:1220px;top:608px;width:14px;height:15px;background:#d1d9de"></div><div class="m" style="left:1167px;top:623px;width:67px;height:15px;background:#f2fafd"></div><div class="m" style="left:1167px;top:638px;width:67px;height:14px;background:#ffffff"></div><div class="m" style="left:1167px;top:638px;width:8px;height:14px;background:#e6e4e5"></div><div class="m" style="left:1175px;top:638px;width:15px;height:14px;background:#eeedee"></div><div class="m" style="left:1190px;top:638px;width:15px;height:14px;background:#e2e1e1"></div><div class="m" style="left:1205px;top:638px;width:15px;height:14px;background:#eae8e9"></div><div class="m" style="left:1220px;top:638px;width:14px;height:14px;background:#e9e7e8"></div>
<div class="m" style="left:1325px;top:405px;width:64px;height:8px;background:#ffffff"></div><div class="m" style="left:1325px;top:405px;width:8px;height:8px;background:#c4c0c2"></div><div class="m" style="left:1333px;top:405px;width:15px;height:8px;background:#dad8d9"></div><div class="m" style="left:1348px;top:405px;width:15px;height:8px;background:#c3c0c1"></div><div class="m" style="left:1363px;top:405px;width:15px;height:8px;background:#d2cfd0"></div><div class="m" style="left:1378px;top:405px;width:11px;height:8px;background:#ebeaea"></div><div class="m" style="left:1325px;top:413px;width:64px;height:15px;background:#ffffff"></div><div class="m" style="left:1325px;top:413px;width:8px;height:15px;background:#ebeaeb"></div><div class="m" style="left:1333px;top:413px;width:15px;height:15px;background:#f1f0f0"></div><div class="m" style="left:1348px;top:413px;width:15px;height:15px;background:#eae9e9"></div><div class="m" style="left:1363px;top:413px;width:15px;height:15px;background:#efeeee"></div><div class="m" style="left:1378px;top:413px;width:11px;height:15px;background:#f9f8f9"></div><div class="m" style="left:1325px;top:428px;width:64px;height:15px;background:#f2fafd"></div><div class="m" style="left:1325px;top:443px;width:64px;height:15px;background:#f2fafd"></div><div class="m" style="left:1325px;top:443px;width:8px;height:15px;background:#bbc3c8"></div><div class="m" style="left:1333px;top:443px;width:15px;height:15px;background:#d0d8dc"></div><div class="m" style="left:1348px;top:443px;width:15px;height:15px;background:#bcc4ca"></div><div class="m" style="left:1363px;top:443px;width:15px;height:15px;background:#c9d1d6"></div><div class="m" style="left:1378px;top:443px;width:11px;height:15px;background:#dfe7eb"></div><div class="m" style="left:1325px;top:458px;width:64px;height:15px;background:#f2fafd"></div><div class="m" style="left:1325px;top:473px;width:64px;height:15px;background:#ffffff"></div><div class="m" style="left:1325px;top:473px;width:8px;height:15px;background:#f1f1f1"></div><div class="m" style="left:1333px;top:473px;width:15px;height:15px;background:#f6f6f6"></div><div class="m" style="left:1348px;top:473px;width:15px;height:15px;background:#f2f1f1"></div><div class="m" style="left:1363px;top:473px;width:15px;height:15px;background:#f5f4f4"></div><div class="m" style="left:1378px;top:473px;width:11px;height:15px;background:#fcfcfc"></div><div class="m" style="left:1325px;top:488px;width:64px;height:15px;background:#ffffff"></div><div class="m" style="left:1325px;top:488px;width:8px;height:15px;background:#d8d5d6"></div><div class="m" style="left:1333px;top:488px;width:15px;height:15px;background:#e5e3e4"></div><div class="m" style="left:1348px;top:488px;width:15px;height:15px;background:#d6d4d4"></div><div class="m" style="left:1363px;top:488px;width:15px;height:15px;background:#dfdddd"></div><div class="m" style="left:1378px;top:488px;width:11px;height:15px;background:#efeeee"></div><div class="m" style="left:1325px;top:503px;width:64px;height:15px;background:#fcfeff"></div><div class="m" style="left:1325px;top:518px;width:64px;height:15px;background:#f2fafd"></div><div class="m" style="left:1325px;top:518px;width:8px;height:15px;background:#d2dade"></div><div class="m" style="left:1333px;top:518px;width:15px;height:15px;background:#dce4e8"></div><div class="m" style="left:1348px;top:518px;width:15px;height:15px;background:#cfd7dc"></div><div class="m" style="left:1363px;top:518px;width:15px;height:15px;background:#d8e0e4"></div><div class="m" style="left:1378px;top:518px;width:11px;height:15px;background:#e7eff2"></div><div class="m" style="left:1325px;top:533px;width:64px;height:15px;background:#f2fafd"></div><div class="m" style="left:1325px;top:533px;width:8px;height:15px;background:#dde5e9"></div><div class="m" style="left:1333px;top:533px;width:15px;height:15px;background:#e6eef2"></div><div class="m" style="left:1348px;top:533px;width:15px;height:15px;background:#dbe3e7"></div><div class="m" style="left:1363px;top:533px;width:15px;height:15px;background:#e0e8ec"></div><div class="m" style="left:1378px;top:533px;width:11px;height:15px;background:#eaf2f5"></div><div class="m" style="left:1325px;top:548px;width:64px;height:15px;background:#fdfeff"></div><div class="m" style="left:1325px;top:563px;width:64px;height:15px;background:#ffffff"></div><div class="m" style="left:1325px;top:563px;width:8px;height:15px;background:#ccc9ca"></div><div class="m" style="left:1333px;top:563px;width:15px;height:15px;background:#dcdadb"></div><div class="m" style="left:1348px;top:563px;width:15px;height:15px;background:#cbc7c9"></div><div class="m" style="left:1363px;top:563px;width:15px;height:15px;background:#d5d3d4"></div><div class="m" style="left:1378px;top:563px;width:11px;height:15px;background:#ebeaea"></div><div class="m" style="left:1325px;top:578px;width:64px;height:15px;background:#feffff"></div><div class="m" style="left:1325px;top:593px;width:64px;height:15px;background:#f2fafd"></div><div class="m" style="left:1325px;top:593px;width:8px;height:15px;background:#e5edf1"></div><div class="m" style="left:1333px;top:593px;width:15px;height:15px;background:#eaf2f6"></div><div class="m" style="left:1348px;top:593px;width:15px;height:15px;background:#e5edf1"></div><div class="m" style="left:1363px;top:593px;width:15px;height:15px;background:#e8f0f4"></div><div class="m" style="left:1378px;top:593px;width:11px;height:15px;background:#eff7fa"></div><div class="m" style="left:1325px;top:608px;width:64px;height:15px;background:#f2fafd"></div><div class="m" style="left:1325px;top:608px;width:8px;height:15px;background:#c8d0d5"></div><div class="m" style="left:1333px;top:608px;width:15px;height:15px;background:#d6dee2"></div><div class="m" style="left:1348px;top:608px;width:15px;height:15px;background:#c9d1d6"></div><div class="m" style="left:1363px;top:608px;width:15px;height:15px;background:#d3dbe0"></div><div class="m" style="left:1378px;top:608px;width:11px;height:15px;background:#e2eaee"></div><div class="m" style="left:1325px;top:623px;width:64px;height:15px;background:#f2fafd"></div><div class="m" style="left:1325px;top:638px;width:64px;height:14px;background:#ffffff"></div><div class="m" style="left:1325px;top:638px;width:8px;height:14px;background:#e2e0e1"></div><div class="m" style="left:1333px;top:638px;width:15px;height:14px;background:#ecebeb"></div><div class="m" style="left:1348px;top:638px;width:15px;height:14px;background:#e1dfe0"></div><div class="m" style="left:1363px;top:638px;width:15px;height:14px;background:#e8e7e7"></div><div class="m" style="left:1378px;top:638px;width:11px;height:14px;background:#f2f1f2"></div>
<div class="cb" style="top:370px"></div>
<div class="cb" style="top:405px"></div><div class="a" style="left:1464px;top:399px;width:25px;height:25px;border-radius:50%;background:#efefef"></div><div class="cb" style="top:445px"></div><div class="a" style="left:1464px;top:439px;width:25px;height:25px;border-radius:50%;background:#efefef"></div><div class="cb" style="top:485px"></div><div class="a" style="left:1464px;top:479px;width:25px;height:25px;border-radius:50%;background:#efefef"></div><div class="cb" style="top:525px"></div><div class="a" style="left:1464px;top:519px;width:25px;height:25px;border-radius:50%;background:#efefef"></div><div class="cb" style="top:565px"></div><div class="a" style="left:1464px;top:559px;width:25px;height:25px;border-radius:50%;background:#efefef"></div><div class="cb" style="top:605px"></div><div class="a" style="left:1464px;top:599px;width:25px;height:25px;border-radius:50%;background:#efefef"></div><div class="cb" style="top:645px"></div><div class="a" style="left:1464px;top:639px;width:25px;height:25px;border-radius:50%;background:#efefef"></div>
<span class="t" style="left:553.2px;top:405.0px;font-size:14px;color:#222;letter-spacing:0.53px;">6/5/2025</span><span class="t" style="left:741.2px;top:405.0px;font-size:14px;color:#222;letter-spacing:0.2px;">123</span><span class="t" style="left:908.9px;top:405.0px;font-size:14px;color:#222;letter-spacing:-0.05px;">456</span><span class="t" style="left:1264.7px;top:405.0px;font-size:14px;color:#222;letter-spacing:-0.95px;">EUR</span>
<span class="t" style="left:553.2px;top:445.0px;font-size:14px;color:#222;letter-spacing:0.53px;">6/5/2025</span><span class="t" style="left:741.2px;top:445.0px;font-size:14px;color:#222;letter-spacing:0.2px;">123</span><span class="t" style="left:908.9px;top:445.0px;font-size:14px;color:#222;letter-spacing:-0.05px;">456</span><span class="t" style="left:1264.7px;top:445.0px;font-size:14px;color:#222;letter-spacing:-0.95px;">EUR</span>
<span class="t" style="left:553.2px;top:485.0px;font-size:14px;color:#222;letter-spacing:0.53px;">6/5/2025</span><span class="t" style="left:741.2px;top:485.0px;font-size:14px;color:#222;letter-spacing:0.2px;">123</span><span class="t" style="left:908.9px;top:485.0px;font-size:14px;color:#222;letter-spacing:-0.05px;">456</span><span class="t" style="left:1264.7px;top:485.0px;font-size:14px;color:#222;letter-spacing:-0.95px;">EUR</span>
<span class="t" style="left:553.2px;top:525.0px;font-size:14px;color:#222;letter-spacing:0.53px;">6/5/2025</span><span class="t" style="left:741.2px;top:525.0px;font-size:14px;color:#222;letter-spacing:0.2px;">123</span><span class="t" style="left:908.9px;top:525.0px;font-size:14px;color:#222;letter-spacing:-0.05px;">456</span><span class="t" style="left:1264.7px;top:525.0px;font-size:14px;color:#222;letter-spacing:-0.95px;">EUR</span>
<span class="t" style="left:553.2px;top:565.0px;font-size:14px;color:#222;letter-spacing:0.53px;">6/5/2025</span><span class="t" style="left:741.2px;top:565.0px;font-size:14px;color:#222;letter-spacing:0.2px;">123</span><span class="t" style="left:908.9px;top:565.0px;font-size:14px;color:#222;letter-spacing:-0.05px;">456</span><span class="t" style="left:1264.7px;top:565.0px;font-size:14px;color:#222;letter-spacing:-0.95px;">EUR</span>
<span class="t" style="left:553.2px;top:605.0px;font-size:14px;color:#222;letter-spacing:0.53px;">6/5/2025</span><span class="t" style="left:741.2px;top:605.0px;font-size:14px;color:#222;letter-spacing:0.2px;">123</span><span class="t" style="left:908.9px;top:605.0px;font-size:14px;color:#222;letter-spacing:-0.05px;">456</span><span class="t" style="left:1264.7px;top:605.0px;font-size:14px;color:#222;letter-spacing:-0.95px;">EUR</span>
<span class="t" style="left:553.2px;top:645.0px;font-size:14px;color:#222;letter-spacing:0.53px;">6/5/2025</span><span class="t" style="left:741.2px;top:645.0px;font-size:14px;color:#222;letter-spacing:0.2px;">123</span><span class="t" style="left:908.9px;top:645.0px;font-size:14px;color:#222;letter-spacing:-0.05px;">456</span><span class="t" style="left:1264.7px;top:645.0px;font-size:14px;color:#222;letter-spacing:-0.95px;">EUR</span>
<span class="t" style="left:285.6px;top:371.0px;font-size:12px;color:#666b71;letter-spacing:0.54px;">Number</span>
<span class="t" style="left:544.4px;top:371.0px;font-size:12px;color:#666b71;letter-spacing:0.57px;">Date</span>
<span class="t" style="left:632.8px;top:371.0px;font-size:12px;color:#666b71;letter-spacing:0.23px;">Title</span>
<span class="t" style="left:741.2px;top:371.0px;font-size:12px;color:#666b71;letter-spacing:0.09px;">Service code - billing site</span>
<span class="t" style="left:909.4px;top:371.0px;font-size:12px;color:#666b71;letter-spacing:0.13px;">Service label - billing site</span>
<span class="t" style="left:1075.3px;top:371.0px;font-size:12px;color:#666b71;letter-spacing:0.06px;">Excl. tax</span>
<span class="t" style="left:1159.9px;top:371.0px;font-size:12px;color:#666b71;letter-spacing:0.26px;">Incl. tax</span>
<span class="t" style="left:1244.0px;top:371.0px;font-size:12px;color:#666b71;letter-spacing:0.17px;">Currency</span>
<span class="t" style="left:1326.7px;top:371.0px;font-size:12px;color:#666b71;letter-spacing:0.29px;">Customer code</span>
<span class="t" style="left:1448.3px;top:371.0px;font-size:12px;color:#666b71;letter-spacing:0.2px;">Actions</span>
<svg class="i" viewBox="0 0 1526 805"><path d="M1468.900 411.7 C1471.600 403.2 1482.200 403.2 1484.900 411.7 C1482.200 420.2 1471.600 420.2 1468.900 411.7z" fill="#7e99b9"/><circle cx="1476.900" cy="411.7" r="4" fill="#efefef"/><circle cx="1476.900" cy="411.7" r="2.700" fill="#7e99b9"/><circle cx="1475.700" cy="410.5" r="1.100" fill="#efefef"/><path d="M1468.900 451.7 C1471.600 443.2 1482.200 443.2 1484.900 451.7 C1482.200 460.2 1471.600 460.2 1468.900 451.7z" fill="#7e99b9"/><circle cx="1476.900" cy="451.7" r="4" fill="#efefef"/><circle cx="1476.900" cy="451.7" r="2.700" fill="#7e99b9"/><circle cx="1475.700" cy="450.5" r="1.100" fill="#efefef"/><path d="M1468.900 491.7 C1471.600 483.2 1482.200 483.2 1484.900 491.7 C1482.200 500.2 1471.600 500.2 1468.900 491.7z" fill="#7e99b9"/><circle cx="1476.900" cy="491.7" r="4" fill="#efefef"/><circle cx="1476.900" cy="491.7" r="2.700" fill="#7e99b9"/><circle cx="1475.700" cy="490.5" r="1.100" fill="#efefef"/><path d="M1468.900 531.7 C1471.600 523.2 1482.200 523.2 1484.900 531.7 C1482.200 540.2 1471.600 540.2 1468.900 531.7z" fill="#7e99b9"/><circle cx="1476.900" cy="531.7" r="4" fill="#efefef"/><circle cx="1476.900" cy="531.7" r="2.700" fill="#7e99b9"/><circle cx="1475.700" cy="530.5" r="1.100" fill="#efefef"/><path d="M1468.900 571.7 C1471.600 563.2 1482.200 563.2 1484.900 571.7 C1482.200 580.2 1471.600 580.2 1468.900 571.7z" fill="#7e99b9"/><circle cx="1476.900" cy="571.7" r="4" fill="#efefef"/><circle cx="1476.900" cy="571.7" r="2.700" fill="#7e99b9"/><circle cx="1475.700" cy="570.5" r="1.100" fill="#efefef"/><path d="M1468.900 611.7 C1471.600 603.2 1482.200 603.2 1484.900 611.7 C1482.200 620.2 1471.600 620.2 1468.900 611.7z" fill="#7e99b9"/><circle cx="1476.900" cy="611.7" r="4" fill="#efefef"/><circle cx="1476.900" cy="611.7" r="2.700" fill="#7e99b9"/><circle cx="1475.700" cy="610.5" r="1.100" fill="#efefef"/><path d="M1468.900 651.7 C1471.600 643.2 1482.200 643.2 1484.900 651.7 C1482.200 660.2 1471.600 660.2 1468.900 651.7z" fill="#7e99b9"/><circle cx="1476.900" cy="651.7" r="4" fill="#efefef"/><circle cx="1476.900" cy="651.7" r="2.700" fill="#7e99b9"/><circle cx="1475.700" cy="650.5" r="1.100" fill="#efefef"/></svg>
<div class="a" style="left:240px;top:650px;width:1255px;height:2px;background:#111"></div>
<div class="a" style="left:240px;top:652px;width:1255px;height:78px;background:#fafafa"></div>
<div class="a" style="left:240px;top:690px;width:1255px;height:1px;background:#111"></div>
<div class="a" style="left:240px;top:730px;width:1270px;height:15px;background:#fff"></div>
<div class="a" style="left:1495px;top:362px;width:15px;height:368px;background:#fdfdfd"></div>
<div class="a" style="left:279px;top:652px;width:1px;height:78px;background:#8fa6c4"></div><div class="a" style="left:538px;top:652px;width:1px;height:78px;background:#8fa6c4"></div><div class="a" style="left:625px;top:652px;width:1px;height:78px;background:#8fa6c4"></div><div class="a" style="left:734px;top:652px;width:1px;height:78px;background:#8fa6c4"></div><div class="a" style="left:901px;top:652px;width:1px;height:78px;background:#8fa6c4"></div><div class="a" style="left:1069px;top:652px;width:1px;height:78px;background:#8fa6c4"></div><div class="a" style="left:1153px;top:652px;width:1px;height:78px;background:#8fa6c4"></div><div class="a" style="left:1318px;top:652px;width:1px;height:78px;background:#8fa6c4"></div><div class="a" style="left:1435px;top:652px;width:1px;height:78px;background:#8fa6c4"></div><div class="a" style="left:1441px;top:652px;width:1px;height:78px;background:#8fa6c4"></div>
<span class="t" style="left:286.5px;top:663.9px;font-size:14px;color:#2b3242;letter-spacing:0.39px;">Total selection</span>
<span class="t" style="left:286.5px;top:704.2px;font-size:14px;color:#2b3242;letter-spacing:0.7px;">Total</span>
<div class="a" style="left:258px;top:733px;width:358px;height:9px;border-radius:4.5px;background:#8b8b8b"></div>
<div class="a" style="left:1498px;top:380px;width:9px;height:30px;border-radius:4.5px;background:#8b8b8b"></div>
<div class="a" style="left:238px;top:360px;width:1274px;height:387px;border:2px solid #7b98ba;border-radius:4px"></div>
<div class="a" style="left:1084px;top:755px;width:84px;height:40px;border:1px solid #9a9a9a;border-radius:4px;background:#fff"></div>
<span class="t" style="left:971.6px;top:768.4px;font-size:13px;color:#444;letter-spacing:0.23px;">N. of lines / page:</span>
<span class="t" style="left:1099.8px;top:768.3px;font-size:13px;color:#333;letter-spacing:-0.5px;">100</span>
<span class="t" style="left:1204.0px;top:768.3px;font-size:13px;color:#444;letter-spacing:-0.03px;">Page 1 / 5</span>
<svg class="i" viewBox="0 0 1526 805">
<path d="M244.600 737.500 L251.600 733.300 V741.700 Z M1490.200 736.600 L1483.600 732.600 V740.600 Z M1502.300 367 L1507 373.400 H1497.600 Z M1502.300 725.400 L1507 719 H1497.600 Z" fill="#8b8b8b"/>
<path d="M1142.600 773.600 H1152 L1147.300 778.300 Z" fill="#6a6a6a"/>
<path d="M1313.400 770 V780.400" stroke="#8d8d8d" stroke-width="1.600"/><path d="M1325.0 770.0 L1319.8 775.2 L1325.0 780.4" fill="none" stroke="#8d8d8d" stroke-width="1.600"/>
<path d="M1369.2 770.0 L1364.0 775.2 L1369.2 780.4" fill="none" stroke="#8d8d8d" stroke-width="1.600"/>
<path d="M1413.4 770.0 L1418.6 775.2 L1413.4 780.4" fill="none" stroke="#444" stroke-width="1.600"/>
<path d="M1457.0 770.0 L1462.2 775.2 L1457.0 780.4" fill="none" stroke="#444" stroke-width="1.600"/><path d="M1468.600 770 V780.400" stroke="#444" stroke-width="1.600"/>
<circle cx="1502.300" cy="775" r="9.700" fill="#7e99b9"/><text x="1502.300" y="779.800" font-family="Liberation Serif, serif" font-size="13.500" font-weight="bold" fill="#fff" text-anchor="middle">i</text>
<!-- red annotation boxes -->
<defs><filter id="ds" x="-5%" y="-20%" width="110%" height="150%"><feDropShadow dx="2.600" dy="3" stdDeviation="1.900" flood-color="#000" flood-opacity=".42"/></filter></defs>
<rect x="591.550" y="194.650" width="711.600" height="54.500" fill="none" stroke="#fa0505" stroke-width="2.200" filter="url(#ds)"/>
<rect x="735.450" y="362.250" width="334.600" height="288.600" fill="none" stroke="#fa0505" stroke-width="2.200" filter="url(#ds)"/>
</svg>
</body>
</html>
